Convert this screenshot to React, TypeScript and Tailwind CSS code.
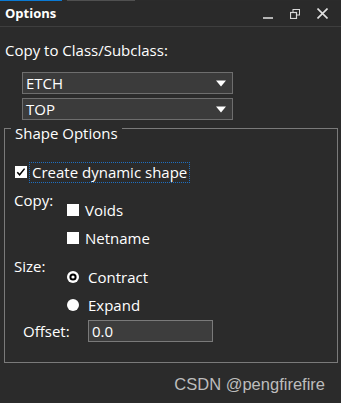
import React from 'react';

const Caret: React.FC = () => (
  <svg width="10" height="7" viewBox="0 0 10 7" className="shrink-0">
    <path d="M0 0.5 L10 0.5 L5 6.5 Z" fill="#ffffff" />
  </svg>
);

const Select: React.FC<{ value: string }> = ({ value }) => (
  <div className="flex h-[22px] w-[211px] items-center justify-between border border-[#6e6e6e] bg-[#3b3b3b] pl-[3px] pr-[6px] text-white">
    <span>{value}</span>
    <Caret />
  </div>
);

const Square: React.FC<{ checked?: boolean }> = ({ checked }) => (
  <svg width="12" height="12" viewBox="0 0 12 12" className="shrink-0">
    <rect x="0" y="0" width="12" height="12" fill="#ffffff" />
    {checked && <path d="M2.3 6.3 L4.6 8.8 L9.6 2.6" stroke="#000" strokeWidth="1.5" fill="none" />}
  </svg>
);

const Radio: React.FC<{ checked?: boolean }> = ({ checked }) => (
  <svg width="12" height="12" viewBox="0 0 12 12" className="shrink-0">
    <circle cx="6" cy="6" r="6" fill="#ffffff" />
    {checked && <circle cx="6" cy="6" r="3.6" fill="#000000" />}
    {checked && <circle cx="6" cy="6" r="1.6" fill="#ffffff" />}
  </svg>
);

const Option: React.FC<{ label: string; children: React.ReactNode; gap: string }> = ({ label, children, gap }) => (
  <div className={`flex h-[20px] items-center ${gap}`}>
    {children}
    <span>{label}</span>
  </div>
);

export default function App() {
  return (
    <div
      className="relative h-[403px] w-[341px] overflow-hidden bg-[#2b2b2b] text-[15px] text-white"
      style={{ fontFamily: '"Open Sans", "Noto Sans", sans-serif' }}
    >
      {/* tab strip */}
      <div className="flex h-px">
        <div className="w-[62px] bg-[#0a7ad4]" />
        <div className="ml-[5px] w-[68px] bg-[#505050]" />
      </div>

      {/* title bar */}
      <div className="flex h-[26px] items-center justify-between border-b border-[#3e3e3e] bg-[#2a2a2a] pl-[5px] pr-[13px]">
        <span className="text-[13px] font-bold">Options</span>
        <div className="flex items-center gap-[17px]">
          <svg width="10" height="10" viewBox="0 0 10 10">
            <path d="M0 9 H10" stroke="#d8d8d8" strokeWidth="1.6" />
          </svg>
          <svg width="10" height="10" viewBox="0 0 10 10">
            <rect x="3" y="0.5" width="6.5" height="5.5" fill="none" stroke="#d8d8d8" strokeWidth="1" />
            <rect x="0.5" y="3.5" width="6" height="6" fill="#2a2a2a" stroke="#d8d8d8" strokeWidth="1.2" />
          </svg>
          <svg width="11" height="11" viewBox="0 0 11 11">
            <path d="M0.5 0.5 L10.5 10.5 M10.5 0.5 L0.5 10.5" stroke="#e0e0e0" strokeWidth="1.6" />
          </svg>
        </div>
      </div>

      {/* body */}
      <div className="px-[4px] pt-[13px]">
        <div className="pl-[1px] leading-[20px]">Copy to Class/Subclass:</div>

        <div className="mt-[12px] flex flex-col gap-[4px] pl-[18px]">
          <Select value="ETCH" />
          <Select value="TOP" />
        </div>

        {/* Shape Options group */}
        <div className="relative mt-[8px] h-[235px] w-[334px] border border-[#7a7a7a] pl-[9px] pt-[32px]">
          <span className="absolute left-[6px] top-[-6px] bg-[#2b2b2b] px-[4px] leading-[20px]">Shape Options</span>

          <div className="flex h-[22px] items-center gap-[2px] pl-[1px]">
            <Square checked />
            <span className="border border-dotted border-[#1e6fc0] px-[2px] leading-[19px]">Create dynamic shape</span>
          </div>

          <div className="mt-[7px] flex">
            <span className="w-[53px] leading-[20px]">Copy:</span>
            <div className="mt-[10px] flex flex-col gap-[8px]">
              <Option label="Voids" gap="gap-[6px]">
                <Square />
              </Option>
              <Option label="Netname" gap="gap-[6px]">
                <Square />
              </Option>
            </div>
          </div>

          <div className="mt-[8px] flex">
            <span className="w-[53px] leading-[20px]">Size:</span>
            <div className="mt-[11px] flex flex-col gap-[8px]">
              <Option label="Contract" gap="gap-[9px]">
                <Radio checked />
              </Option>
              <Option label="Expand" gap="gap-[9px]">
                <Radio />
              </Option>
            </div>
          </div>

          <div className="mt-[5px] flex items-center">
            <span className="w-[74px] pl-[9px]">Offset:</span>
            <div className="flex h-[22px] w-[125px] items-center border border-[#7a7a7a] bg-[#3d3d3d] pl-[3px]">0.0</div>
          </div>
        </div>
      </div>

      <div
        className="mt-[9px] pr-[16px] text-right text-[16.5px] text-[#bdbdbd]"
        style={{ fontFamily: '"Liberation Sans", Arial, sans-serif' }}
      >
        CSDN @pengfirefire
      </div>
    </div>
  );
}
